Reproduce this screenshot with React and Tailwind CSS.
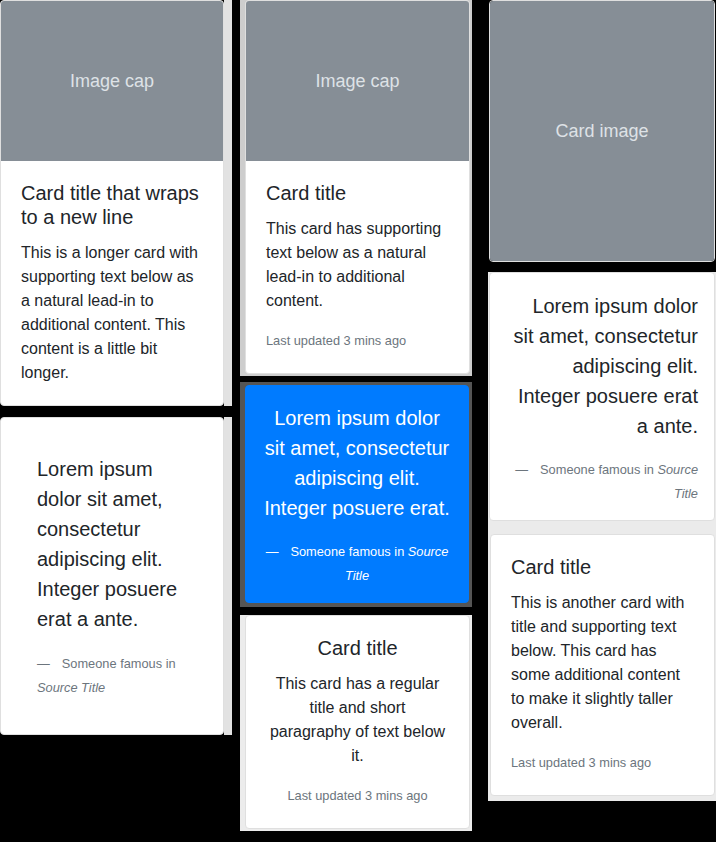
import React from 'react';

const font = { fontFamily: '"Liberation Sans", Arial, sans-serif' };

const Img = ({ label, h, cls = '' }) => (
  <div className={`flex items-center justify-center bg-[#868e96] text-[18px] text-[#dee2e6] ${h} ${cls}`}>
    {label}
  </div>
);

const Muted = ({ children, cls = '' }) => (
  <p className={`text-[12.8px] leading-6 text-[#6c757d] ${cls}`}>{children}</p>
);

const Quote = ({ lines, footer, align = 'text-left', tone = 'text-[#212529]', foot = 'text-[#6c757d]' }) => (
  <blockquote className={align}>
    <p className={`text-[20px] leading-[30px] ${tone}`}>{lines}</p>
    <footer className={`mt-[17px] text-[12.8px] leading-6 ${foot}`}>
      <span className="mr-3">—</span>
      {footer}
    </footer>
  </blockquote>
);

export default function App() {
  return (
    <div style={font} className="flex min-h-screen bg-black text-[#212529]">
      {/* column 1 */}
      <div className="flex w-[232px] flex-col">
        <div className="flex">
          <div className="w-[224px] overflow-hidden rounded border border-[#dfdfdf] bg-white">
            <Img label="Image cap" h="h-[160px]" />
            <div className="px-5 pt-5 pb-5">
              <h5 className="text-[20px] leading-6">Card title that wraps to a new line</h5>
              <p className="mt-3 text-[16px] leading-6">
                This is a longer card with supporting text below as a natural lead-in to additional content. This content is a little bit longer.
              </p>
            </div>
          </div>
          <div className="w-2 bg-[#e2e2e2]" />
        </div>
        <div className="mt-[11px] flex">
          <div className="w-[224px] rounded border border-[#dfdfdf] bg-white px-9 pt-9 pb-[34px]">
            <blockquote>
              <p className="text-[20px] leading-[30px]">
                Lorem ipsum dolor sit amet, consectetur adipiscing elit. Integer posuere erat a ante.
              </p>
              <footer className="mt-[18px] text-[12.8px] leading-6 text-[#6c757d]">
                <span className="mr-3">—</span>Someone famous in <cite>Source Title</cite>
              </footer>
            </blockquote>
          </div>
          <div className="w-2 bg-[#e2e2e2]" />
        </div>
      </div>

      {/* column 2 */}
      <div className="ml-2 flex w-[232px] flex-col">
        <div className="bg-[#cdcdcd] pr-[2px] pb-[2px] pl-[5px]">
          <div className="overflow-hidden rounded border border-[#dfdfdf] bg-white">
            <Img label="Image cap" h="h-[160px]" />
            <div className="px-5 pt-5 pb-5">
              <h5 className="text-[20px] leading-6">Card title</h5>
              <p className="mt-3 text-[16px] leading-6">
                This card has supporting text below as a natural lead-in to additional content.
              </p>
              <Muted cls="mt-4">Last updated 3 mins ago</Muted>
            </div>
          </div>
        </div>
        <div className="mt-[6px] bg-[#555555] pt-[3px] pr-[3px] pb-[4px] pl-[5px]">
          <div className="rounded border border-[#007bff] bg-[#007bff] px-4 pt-[17px] pb-[14px]">
            <Quote
              align="text-center"
              tone="text-white"
              foot="text-white"
              lines="Lorem ipsum dolor sit amet, consectetur adipiscing elit. Integer posuere erat."
              footer={<>Someone famous in <cite>Source Title</cite></>}
            />
          </div>
        </div>
        <div className="mt-2 bg-[#ececec] pr-[2px] pb-[2px] pl-[5px]">
          <div className="rounded border border-[#dfdfdf] bg-white px-[22px] pt-5 pb-5 text-center">
            <h5 className="text-[20px] leading-6">Card title</h5>
            <p className="mt-3 text-[16px] leading-6">
              This card has a regular title and short paragraphy of text below it.
            </p>
            <Muted cls="mt-4">Last updated 3 mins ago</Muted>
          </div>
        </div>
      </div>

      {/* column 3 */}
      <div className="ml-4 flex w-[228px] flex-col">
        <div className="mx-px overflow-hidden rounded border border-[#dfdfdf]">
          <Img label="Card image" h="h-[260px]" />
        </div>
        <div className="mt-[10px] bg-[#ebebeb] px-px pb-[5px]">
          <div className="rounded border border-[#dfdfdf] bg-white pt-[18px] pr-4 pb-[14px] pl-5">
            <Quote
              align="text-right"
              lines="Lorem ipsum dolor sit amet, consectetur adipiscing elit. Integer posuere erat a ante."
              footer={<>Someone famous in <cite>Source Title</cite></>}
            />
          </div>
          <div className="mt-[13px] ml-px rounded border border-[#dfdfdf] bg-white px-5 pt-5 pb-5">
            <h5 className="text-[20px] leading-6">Card title</h5>
            <p className="mt-3 text-[16px] leading-6">
              This is another card with title and supporting text below. This card has some additional content to make it slightly taller overall.
            </p>
            <Muted cls="mt-4">Last updated 3 mins ago</Muted>
          </div>
        </div>
      </div>
    </div>
  );
}
